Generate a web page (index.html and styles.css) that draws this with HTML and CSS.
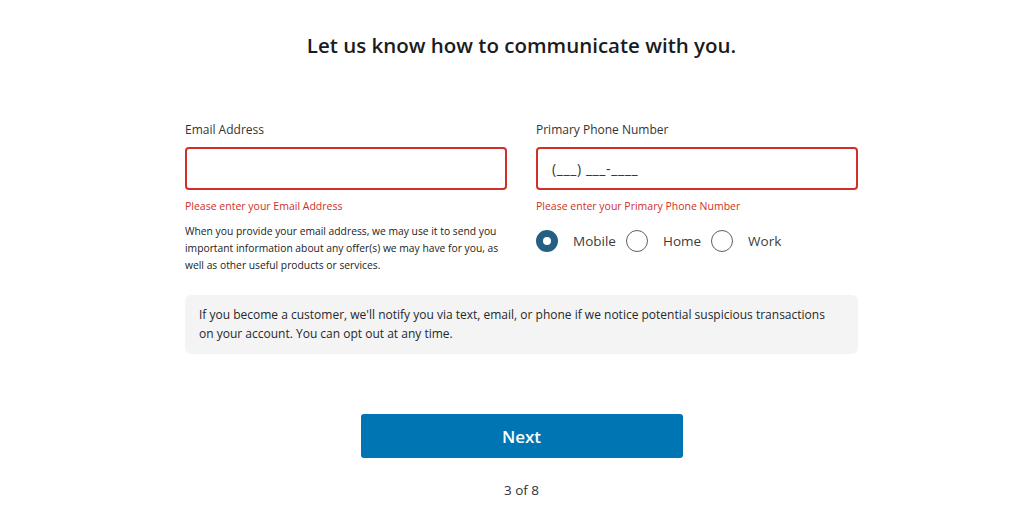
FILE: index.html
```html
<!DOCTYPE html>
<html>
<head>
<meta charset="utf-8">
<link rel="stylesheet" href="styles.css">
</head>
<body>
<main class="page">
  <h1 class="title">Let us know how to communicate with you.</h1>
  <div class="form">
    <div class="cols">
      <div class="col">
        <label class="label">Email Address</label>
        <div class="input"></div>
        <div class="error">Please enter your Email Address</div>
        <p class="help">When you provide your email address, we may use it to send you important information about any offer(s) we may have for you, as well as other useful products or services.</p>
      </div>
      <div class="col">
        <label class="label">Primary Phone Number</label>
        <div class="input"><span class="placeholder">(___) ___-____</span></div>
        <div class="error">Please enter your Primary Phone Number</div>
        <div class="radios">
          <span class="radio checked"></span><span class="rlabel">Mobile</span>
          <span class="radio"></span><span class="rlabel">Home</span>
          <span class="radio"></span><span class="rlabel">Work</span>
        </div>
      </div>
    </div>
    <div class="info">If you become a customer, we'll notify you via text, email, or phone if we notice potential suspicious transactions on your account. You can opt out at any time.</div>
  </div>
  <button class="next">Next</button>
  <div class="step">3 of 8</div>
</main>
</body>
</html>
```
FILE: styles.css
```css
* { box-sizing: border-box; }
body {
  margin: 0;
  background: #fff;
  font-family: "Open Sans", "Noto Sans", sans-serif;
  color: #25282b;
}
.page {
  display: flex;
  flex-direction: column;
  align-items: center;
  padding-left: 19px;
}
.title {
  margin: 32px 0 0;
  font-size: 20.5px;
  font-weight: 600;
  line-height: 26px;
  color: #1a1c1e;
}
.form {
  width: 673px;
  margin-top: 63px;
}
.cols {
  display: flex;
  gap: 29px;
}
.col {
  width: 322px;
  display: flex;
  flex-direction: column;
}
.label {
  font-size: 12px;
  line-height: 18px;
  color: #333;
}
.input {
  margin-top: 8px;
  height: 43px;
  border: 2px solid #d03027;
  border-radius: 4px;
  display: flex;
  align-items: center;
  padding-left: 14px;
}
.placeholder {
  font-size: 14px;
  letter-spacing: 0.6px;
  color: #333;
}
.error {
  margin-top: 9px;
  font-size: 10.5px;
  line-height: 15px;
  color: #d03027;
}
.help {
  margin: 9px 0 0;
  font-size: 10.3px;
  line-height: 17px;
  color: #222;
}
.radios {
  margin-top: 16px;
  display: flex;
  align-items: center;
}
.radio {
  width: 22px;
  height: 22px;
  border-radius: 50%;
  border: 1.5px solid #5e6063;
  background: #fff;
  flex: none;
}
.radio.checked {
  border: 7px solid #255f82;
  background: #fff;
}
.rlabel {
  font-size: 13.5px;
  color: #3b3d40;
  margin-left: 15px;
  margin-right: 10px;
}
.info {
  margin-top: 21px;
  background: #f4f4f4;
  border-radius: 6px;
  padding: 10px 26px 11px 14px;
  font-size: 12px;
  line-height: 19px;
  color: #25282b;
}
.next {
  margin-top: 60px;
  width: 322px;
  height: 44px;
  border: 0;
  border-radius: 3px;
  background: #0075b3;
  color: #fff;
  font-family: "Open Sans", "Noto Sans", sans-serif;
  font-size: 17px;
  font-weight: 600;
}
.step {
  margin-top: 23px;
  font-size: 13.5px;
  color: #333;
}
```
